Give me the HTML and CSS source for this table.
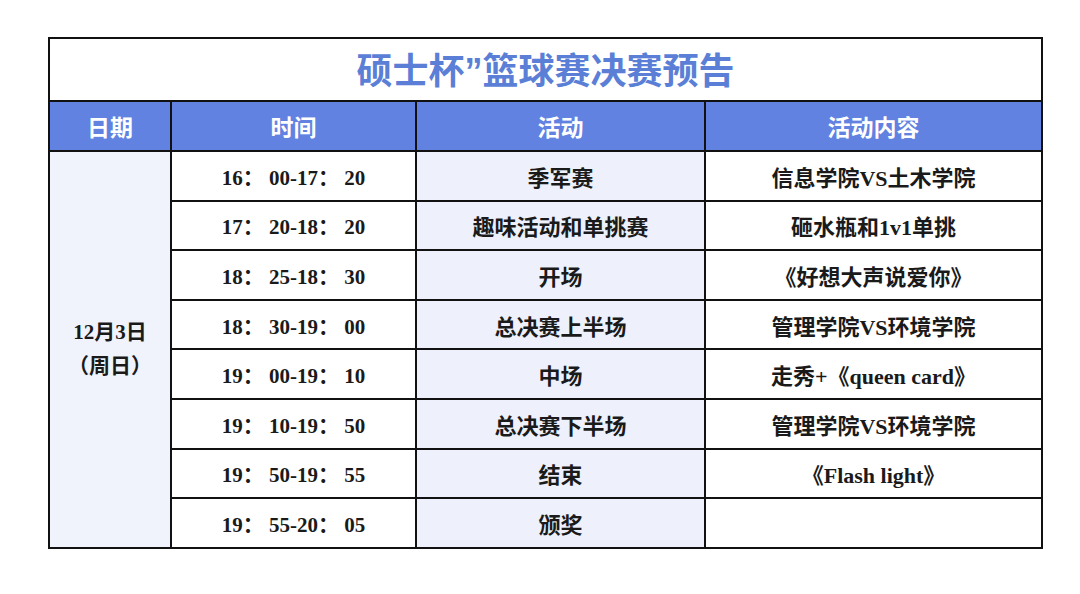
FILE: index.html
```html
<!DOCTYPE html>
<html lang="zh-CN">
<head>
<meta charset="utf-8">
<link rel="stylesheet" href="styles.css">
</head>
<body>
<div class="page">
<table class="sched">
  <colgroup>
    <col class="c1"><col class="c2"><col class="c3"><col class="c4">
  </colgroup>
  <tr class="title-row"><td colspan="4" class="title">硕士杯<span class="q">”</span>篮球赛决赛预告</td></tr>
  <tr class="head-row"><th>日期</th><th>时间</th><th>活动</th><th>活动内容</th></tr>
  <tr class="data-row"><td rowspan="8" class="date">12月3日<br>（周日）</td><td class="time">16： 00-17： 20</td><td class="act">季军赛</td><td class="cont">信息学院VS土木学院</td></tr>
  <tr class="data-row"><td class="time">17： 20-18： 20</td><td class="act">趣味活动和单挑赛</td><td class="cont">砸水瓶和1v1单挑</td></tr>
  <tr class="data-row"><td class="time">18： 25-18： 30</td><td class="act">开场</td><td class="cont">《好想大声说爱你》</td></tr>
  <tr class="data-row"><td class="time">18： 30-19： 00</td><td class="act">总决赛上半场</td><td class="cont">管理学院VS环境学院</td></tr>
  <tr class="data-row"><td class="time">19： 00-19： 10</td><td class="act">中场</td><td class="cont">走秀+《queen card》</td></tr>
  <tr class="data-row"><td class="time">19： 10-19： 50</td><td class="act">总决赛下半场</td><td class="cont">管理学院VS环境学院</td></tr>
  <tr class="data-row"><td class="time">19： 50-19： 55</td><td class="act">结束</td><td class="cont">《Flash light》</td></tr>
  <tr class="data-row"><td class="time">19： 55-20： 05</td><td class="act">颁奖</td><td class="cont"></td></tr>
</table>
</div>
</body>
</html>
```
FILE: styles.css
```css
html, body {
  margin: 0;
  padding: 0;
  background: #ffffff;
}
.page {
  padding: 37px 0 0 48px;
}
.sched {
  border-collapse: collapse;
  width: 993px;
  table-layout: fixed;
  font-family: "Liberation Serif", "Noto Sans CJK SC", serif;
  font-weight: 700;
  color: #1a1a1a;
}
.c1 { width: 122px; }
.c2 { width: 245px; }
.c3 { width: 289px; }
.c4 { width: 337px; }
.sched td, .sched th {
  border: 2px solid #111111;
  text-align: center;
  vertical-align: middle;
  padding: 0;
  font-size: 21px;
}
.sched .title-row { height: 63px; }
.sched .title {
  font-family: "Noto Sans CJK SC", sans-serif;
  font-size: 36px;
  font-weight: 700;
  color: #5b7fd6;
  line-height: 1;
}
.sched .title .q {
  font-family: "Liberation Sans", sans-serif;
  font-weight: 700;
}
.sched .head-row { height: 50px; }
.sched .head-row th {
  background: #6182e1;
  color: #ffffff;
  font-family: "Noto Sans CJK SC", sans-serif;
  font-size: 23px;
  font-weight: 700;
}
.sched .data-row { height: 49.6px; }
.sched .date {
  background: #f1f3fc;
  line-height: 34px;
  font-size: 21px;
}
.sched .time {
  background: #ffffff;
  font-size: 21px;
}
.sched .act {
  background: #eef1fb;
  font-family: "Noto Sans CJK SC", sans-serif;
  font-size: 22px;
}
.sched .cont {
  background: #ffffff;
  font-size: 22px;
}
```
